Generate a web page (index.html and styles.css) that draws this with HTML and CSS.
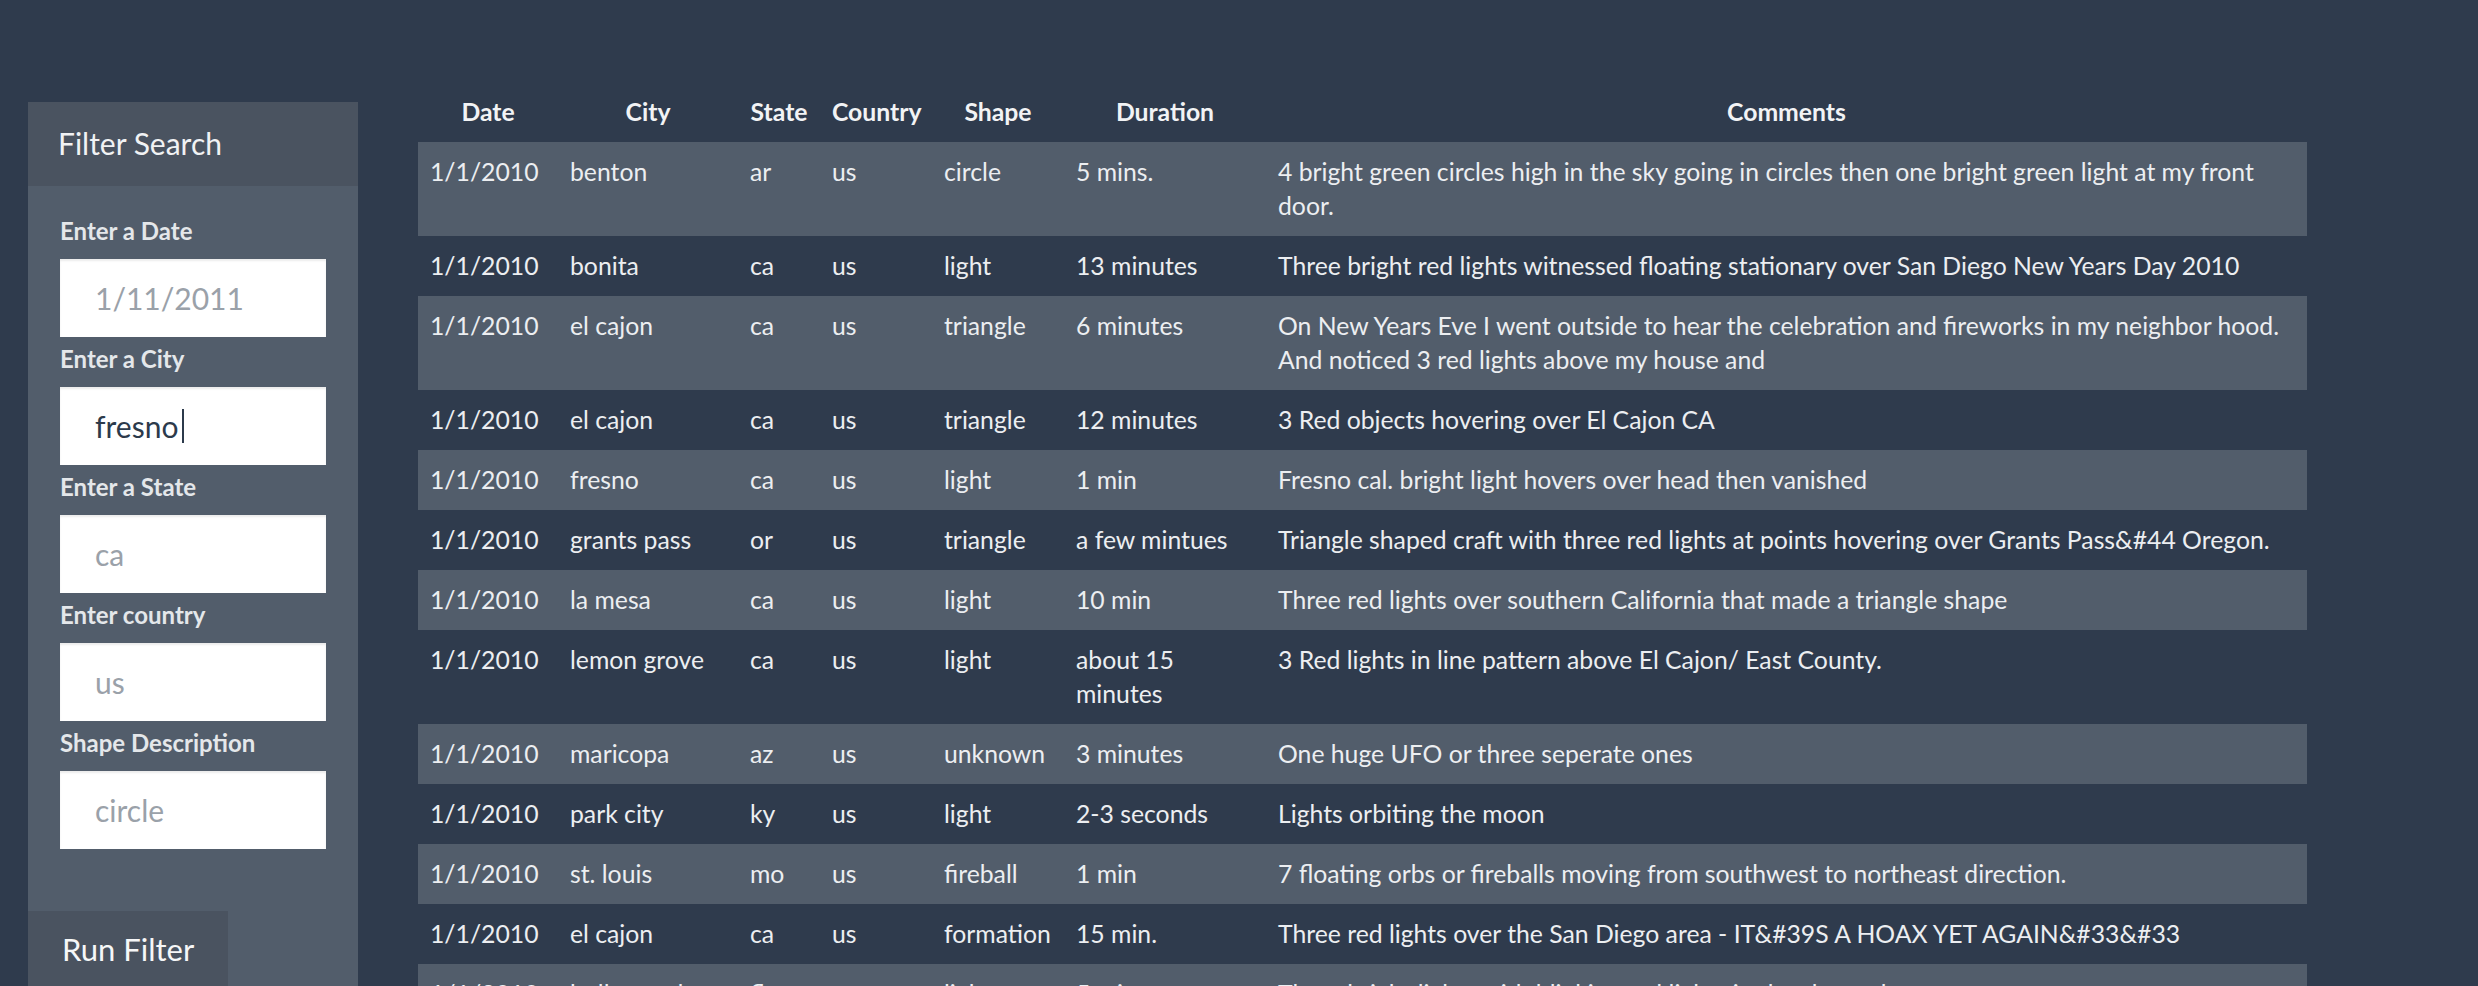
FILE: index.html
```html
<!DOCTYPE html>
<html lang="en">
<head>
<meta charset="utf-8">
<title>UFO Sightings</title>
<link rel="stylesheet" href="styles.css">
</head>
<body>
<div class="page">
  <aside class="filter-panel">
    <div class="filter-head">Filter Search</div>
    <form class="filter-body">
      <ul class="filter-list">
        <li class="filter-item">
          <label class="filter-label" for="datetime">Enter a Date</label>
          <input class="filter-input" id="datetime" type="text" placeholder="1/11/2011">
        </li>
        <li class="filter-item">
          <label class="filter-label" for="city">Enter a City</label>
          <span class="input-wrap">
            <input class="filter-input filled" id="city" type="text" value="fresno">
            <span class="caret"></span>
          </span>
        </li>
        <li class="filter-item">
          <label class="filter-label" for="state">Enter a State</label>
          <input class="filter-input" id="state" type="text" placeholder="ca">
        </li>
        <li class="filter-item">
          <label class="filter-label" for="country">Enter country</label>
          <input class="filter-input" id="country" type="text" placeholder="us">
        </li>
        <li class="filter-item">
          <label class="filter-label" for="shape">Shape Description</label>
          <input class="filter-input" id="shape" type="text" placeholder="circle">
        </li>
      </ul>
      <button class="run-btn" type="button">Run Filter</button>
    </form>
  </aside>

  <main class="results">
    <table class="ufo-table">
      <colgroup>
        <col class="c-date"><col class="c-city"><col class="c-state"><col class="c-country"><col class="c-shape"><col class="c-duration"><col class="c-comments">
      </colgroup>
      <thead>
        <tr><th>Date</th><th>City</th><th>State</th><th>Country</th><th>Shape</th><th>Duration</th><th>Comments</th></tr>
      </thead>
      <tbody>
        <tr><td>1/1/2010</td><td>benton</td><td>ar</td><td>us</td><td>circle</td><td>5 mins.</td><td>4 bright green circles high in the sky going in circles then one bright green light at my front door.</td></tr>
        <tr><td>1/1/2010</td><td>bonita</td><td>ca</td><td>us</td><td>light</td><td>13 minutes</td><td>Three bright red lights witnessed floating stationary over San Diego New Years Day 2010</td></tr>
        <tr><td>1/1/2010</td><td>el cajon</td><td>ca</td><td>us</td><td>triangle</td><td>6 minutes</td><td>On New Years Eve I went outside to hear the celebration and fireworks in my neighbor hood. And noticed 3 red lights above my house and</td></tr>
        <tr><td>1/1/2010</td><td>el cajon</td><td>ca</td><td>us</td><td>triangle</td><td>12 minutes</td><td>3 Red objects hovering over El Cajon CA</td></tr>
        <tr><td>1/1/2010</td><td>fresno</td><td>ca</td><td>us</td><td>light</td><td>1 min</td><td>Fresno cal. bright light hovers over head then vanished</td></tr>
        <tr><td>1/1/2010</td><td>grants pass</td><td>or</td><td>us</td><td>triangle</td><td>a few mintues</td><td>Triangle shaped craft with three red lights at points hovering over Grants Pass&amp;#44 Oregon.</td></tr>
        <tr><td>1/1/2010</td><td>la mesa</td><td>ca</td><td>us</td><td>light</td><td>10 min</td><td>Three red lights over southern California that made a triangle shape</td></tr>
        <tr><td>1/1/2010</td><td>lemon grove</td><td>ca</td><td>us</td><td>light</td><td>about 15 minutes</td><td>3 Red lights in line pattern above El Cajon/ East County.</td></tr>
        <tr><td>1/1/2010</td><td>maricopa</td><td>az</td><td>us</td><td>unknown</td><td>3 minutes</td><td>One huge UFO or three seperate ones</td></tr>
        <tr><td>1/1/2010</td><td>park city</td><td>ky</td><td>us</td><td>light</td><td>2-3 seconds</td><td>Lights orbiting the moon</td></tr>
        <tr><td>1/1/2010</td><td>st. louis</td><td>mo</td><td>us</td><td>fireball</td><td>1 min</td><td>7 floating orbs or fireballs moving from southwest to northeast direction.</td></tr>
        <tr><td>1/1/2010</td><td>el cajon</td><td>ca</td><td>us</td><td>formation</td><td>15 min.</td><td>Three red lights over the San Diego area - IT&amp;#39S A HOAX YET AGAIN&amp;#33&amp;#33</td></tr>
        <tr><td>1/1/2010</td><td>hollywood</td><td>fl</td><td>us</td><td>light</td><td>5 minutes</td><td>Three bright lights with blinking red lights in the sky to the west</td></tr>
      </tbody>
    </table>
  </main>
</div>
</body>
</html>
```
FILE: styles.css
```css
html {
  overflow: hidden;
}

body {
  margin: 0;
  background: #2f3b4d;
  color: #eceef1;
  font-family: "Lato", "Noto Sans", sans-serif;
}

.page {
  display: flex;
  align-items: flex-start;
  gap: 60px;
  padding: 82px 0 0 28px;
}

/* ---------- filter panel ---------- */
.filter-panel {
  width: 330px;
  flex: none;
  margin-top: 20px;
  background: #525d6b;
}

.filter-head {
  height: 84px;
  line-height: 82px;
  padding-left: 30px;
  background: #4a5360;
  font-size: 30px;
  color: #f1f2f4;
}

.filter-body {
  margin: 0;
  padding: 0 0 40px;
}

.filter-list {
  list-style: none;
  margin: 0;
  padding: 28px 32px 0;
}

.filter-item {
  display: flex;
  flex-direction: column;
  align-items: flex-start;
  margin-bottom: 5px;
}

.filter-label {
  font-size: 24px;
  font-weight: 700;
  line-height: 34px;
  margin-bottom: 11px;
  color: #e4e7ea;
}

.input-wrap {
  position: relative;
  display: block;
}

.filter-input {
  display: block;
  box-sizing: border-box;
  width: 266px;
  height: 78px;
  margin: 0;
  padding: 0 0 0 35px;
  border: none;
  background: #fff;
  box-shadow: inset 0 2px 2px rgba(0, 0, 0, 0.08);
  font-family: inherit;
  font-size: 30px;
  color: #2c3a4b;
  outline: none;
}

.filter-input::placeholder {
  color: #9aa1a9;
}

.caret {
  position: absolute;
  left: 122px;
  top: 22px;
  width: 2px;
  height: 34px;
  background: #2c3a4b;
}

.run-btn {
  display: block;
  box-sizing: border-box;
  margin-top: 62px;
  width: 200px;
  height: 90px;
  padding: 0 0 14px 34px;
  border: none;
  background: #4a5360;
  color: #f6f7f8;
  font-family: inherit;
  font-size: 31px;
  text-align: left;
  line-height: 40px;
}

/* ---------- results table ---------- */
.results {
  flex: none;
}

.ufo-table {
  width: 1889px;
  table-layout: fixed;
  border-collapse: collapse;
  border-spacing: 0;
  font-size: 24.75px;
  line-height: 34px;
}

.c-date { width: 140px; }
.c-city { width: 180px; }
.c-state { width: 82px; }
.c-country { width: 112px; }
.c-shape { width: 132px; }
.c-duration { width: 202px; }
.c-comments { width: 1041px; }

.ufo-table th {
  padding: 13px 12px;
  font-weight: 700;
  text-align: center;
  color: #f2f3f5;
}

.ufo-table td {
  padding: 13px 12px;
  vertical-align: top;
  text-align: left;
  color: #eceef1;
}

.ufo-table tbody tr:nth-child(odd) {
  background: #525d6b;
}
```
